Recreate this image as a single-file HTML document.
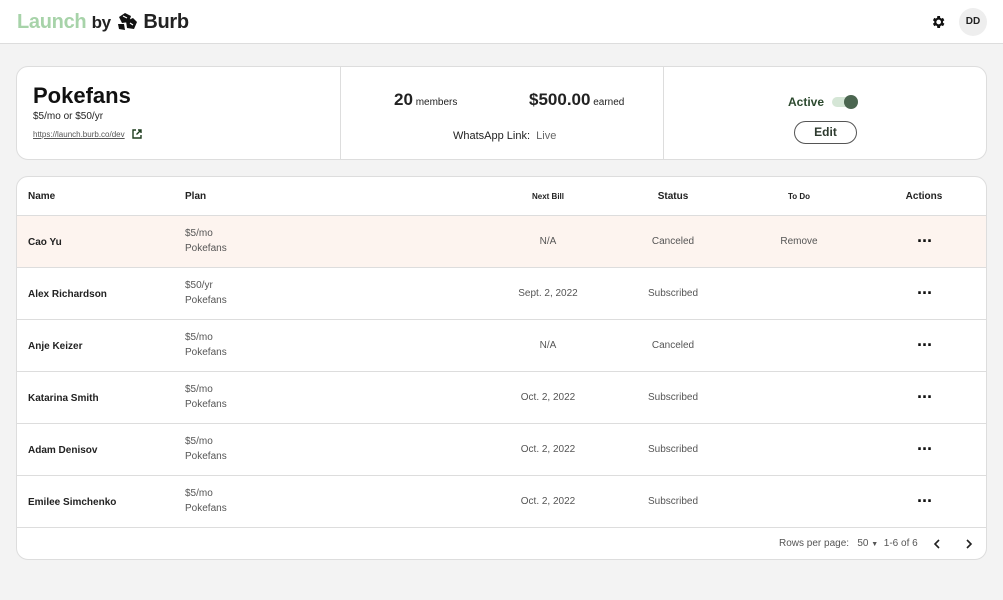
<!DOCTYPE html>
<html><head><style>
*{box-sizing:border-box;margin:0;padding:0}
body{width:1003px;height:600px;background:#f3f3f3;font-family:"Liberation Sans",sans-serif;color:#222;position:relative;overflow:hidden}
.top{position:absolute;left:0;top:0;width:1003px;height:44px;background:#fff;border-bottom:1px solid #ddd}
.logo{position:absolute;left:17px;top:11px;font-size:20px;font-weight:bold;letter-spacing:-0.3px}
.card{position:absolute;left:16px;top:66px;width:971px;height:94px;background:#fff;border:1px solid #ddd;border-radius:12px}
.tbl{position:absolute;left:16px;top:176px;width:971px;height:384px;background:#fff;border:1px solid #ddd;border-radius:12px;overflow:hidden}
.row{position:absolute;left:0;width:971px;border-bottom:1px solid #ddd;font-size:10px;color:#555}
.c{position:absolute;transform:translateX(-50%);white-space:nowrap}
.n{position:absolute;left:11px;font-weight:bold;color:#222}
.p{position:absolute;left:168px;line-height:15px}
.dots{position:absolute;left:900px;font-weight:bold;color:#111;font-size:18px;letter-spacing:-1px}
</style></head><body>
<div class="top">
 <div class="logo"><span style="color:#a7d3a9">Launch</span> <span style="font-size:17px">by</span> <svg width="22" height="20" viewBox="0 0 22 20" style="vertical-align:-3px"><path d="M3 6l6-4 6 3-2 6-7 1z M10 10l7-3 4 4-3 7-7-1z M2 13l6 0 1 6-6-1z" fill="#111"/><path d="M7 5l4 2M14 12l3 2" stroke="#fff" stroke-width="1.2"/></svg> <span>Burb</span></div>
 <svg style="position:absolute;left:930px;top:14px" width="16" height="16" viewBox="0 0 24 24"><path fill="#111" d="M19.4 13a7.5 7.5 0 000-2l2.1-1.6-2-3.5-2.5 1a7 7 0 00-1.7-1L15 3h-4l-.4 2.9a7 7 0 00-1.7 1l-2.5-1-2 3.5L6.5 11a7.5 7.5 0 000 2l-2.1 1.6 2 3.5 2.5-1a7 7 0 001.7 1L11 21h4l.4-2.9a7 7 0 001.7-1l2.5 1 2-3.5zM13 15.5A3.5 3.5 0 1113 8.5a3.5 3.5 0 010 7z"/></svg>
 <div style="position:absolute;left:959px;top:8px;width:28px;height:28px;border-radius:50%;background:#eee;font-size:10px;font-weight:bold;text-align:center;line-height:28px">DD</div>
</div>
<div class="card">
 <div style="position:absolute;left:16px;top:16px;font-size:22px;font-weight:bold;color:#111">Pokefans</div>
 <div style="position:absolute;left:16px;top:44px;font-size:10px">$5/mo or $50/yr</div>
 <div style="position:absolute;left:16px;top:63px;font-size:8px;color:#555;text-decoration:underline">https://launch.burb.co/dev</div>
 <svg style="position:absolute;left:115px;top:62px" width="10" height="10" viewBox="0 0 10 10"><path d="M4 1H1v8h8V6M6 1h3v3M9 1L4.5 5.5" stroke="#1e3d1f" stroke-width="1.4" fill="none"/></svg>
 <div style="position:absolute;left:323px;top:0;width:1px;height:92px;background:#ddd"></div>
 <div style="position:absolute;left:646px;top:0;width:1px;height:92px;background:#ddd"></div>
 <div style="position:absolute;left:377px;top:23px;font-size:10px"><b style="font-size:17px">20</b> members</div>
 <div style="position:absolute;left:512px;top:23px;font-size:10px"><b style="font-size:17px">$500.00</b> earned</div>
 <div style="position:absolute;left:436px;top:63px;font-size:11px">WhatsApp Link: &nbsp;<span style="color:#666">Live</span></div>
 <div style="position:absolute;left:771px;top:28px;font-size:12px;font-weight:bold;color:#2d4a2f">Active</div>
 <div style="position:absolute;left:815px;top:30px;width:24px;height:10px;border-radius:5px;background:#d5e6d6"></div>
 <div style="position:absolute;left:827px;top:28px;width:14px;height:14px;border-radius:50%;background:#4b6650"></div>
 <div style="position:absolute;left:777px;top:54px;width:63px;height:23px;border:1px solid #555;border-radius:12px;font-size:12px;font-weight:bold;text-align:center;line-height:21px;color:#2d3a2e">Edit</div>
</div>
<div class="tbl">
 <div class="row" style="top:0;height:39px;font-size:10px;color:#222;font-weight:bold">
  <span style="position:absolute;left:11px;top:14px">Name</span>
  <span style="position:absolute;left:168px;top:14px">Plan</span>
  <span class="c" style="left:531px;top:15px;font-size:8px">Next Bill</span>
  <span class="c" style="left:656px;top:14px">Status</span>
  <span class="c" style="left:782px;top:15px;font-size:8px">To Do</span>
  <span class="c" style="left:907px;top:14px">Actions</span>
 </div>
 <div class="row" style="top:39px;height:52px;background:#fdf4ef"><span class="n" style="top:21px">Cao Yu</span><span class="p" style="top:10px">$5/mo<br>Pokefans</span><span class="c" style="left:531px;top:20px">N/A</span><span class="c" style="left:656px;top:20px">Canceled</span><span class="c" style="left:782px;top:20px">Remove</span><span class="dots" style="top:15px">···</span></div>
 <div class="row" style="top:91px;height:52px"><span class="n" style="top:21px">Alex Richardson</span><span class="p" style="top:10px">$50/yr<br>Pokefans</span><span class="c" style="left:531px;top:20px">Sept. 2, 2022</span><span class="c" style="left:656px;top:20px">Subscribed</span><span class="dots" style="top:15px">···</span></div>
 <div class="row" style="top:143px;height:52px"><span class="n" style="top:21px">Anje Keizer</span><span class="p" style="top:10px">$5/mo<br>Pokefans</span><span class="c" style="left:531px;top:20px">N/A</span><span class="c" style="left:656px;top:20px">Canceled</span><span class="dots" style="top:15px">···</span></div>
 <div class="row" style="top:195px;height:52px"><span class="n" style="top:21px">Katarina Smith</span><span class="p" style="top:10px">$5/mo<br>Pokefans</span><span class="c" style="left:531px;top:20px">Oct. 2, 2022</span><span class="c" style="left:656px;top:20px">Subscribed</span><span class="dots" style="top:15px">···</span></div>
 <div class="row" style="top:247px;height:52px"><span class="n" style="top:21px">Adam Denisov</span><span class="p" style="top:10px">$5/mo<br>Pokefans</span><span class="c" style="left:531px;top:20px">Oct. 2, 2022</span><span class="c" style="left:656px;top:20px">Subscribed</span><span class="dots" style="top:15px">···</span></div>
 <div class="row" style="top:299px;height:52px"><span class="n" style="top:21px">Emilee Simchenko</span><span class="p" style="top:10px">$5/mo<br>Pokefans</span><span class="c" style="left:531px;top:20px">Oct. 2, 2022</span><span class="c" style="left:656px;top:20px">Subscribed</span><span class="dots" style="top:15px">···</span></div>
 <div style="position:absolute;top:361px;left:762px;font-size:10px;color:#555;white-space:nowrap">Rows per page: &nbsp;&nbsp;50 <span style="font-size:7px">▼</span> &nbsp;1-6 of 6</div>
 <svg style="position:absolute;left:916px;top:362px" width="8" height="10" viewBox="0 0 8 10"><path d="M6 1L2 5l4 4" stroke="#222" stroke-width="1.6" fill="none"/></svg>
 <svg style="position:absolute;left:948px;top:362px" width="8" height="10" viewBox="0 0 8 10"><path d="M2 1l4 4-4 4" stroke="#222" stroke-width="1.6" fill="none"/></svg>
</div>
</body></html>
